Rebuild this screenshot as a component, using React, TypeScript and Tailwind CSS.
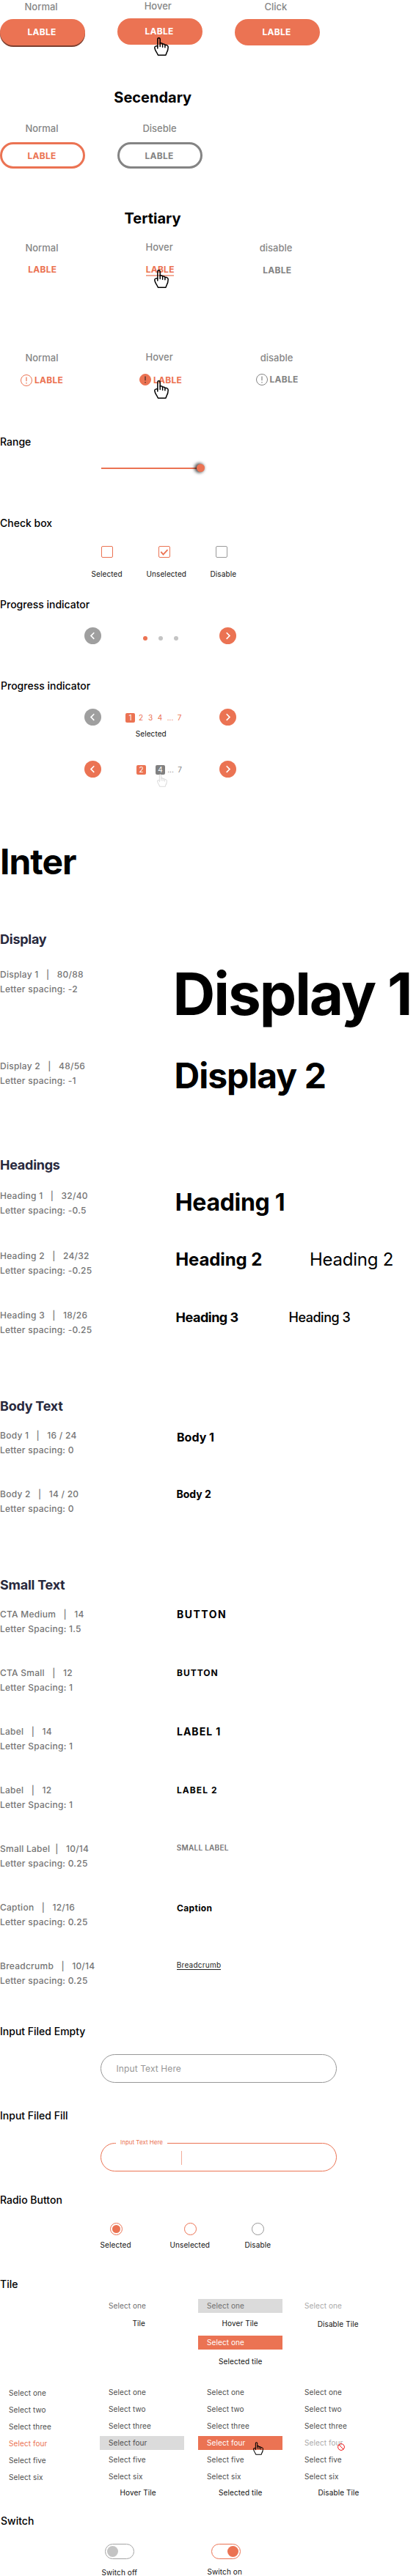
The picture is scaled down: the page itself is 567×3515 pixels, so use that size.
import type { ReactNode } from "react";

type Box = { className?: string; children?: ReactNode };

function Hand({ className = "" }: { className?: string }) {
  return (
    <svg viewBox="0 0 20 25" fill="none" stroke="currentColor" strokeWidth="1.5" strokeLinecap="round" strokeLinejoin="round" className={`absolute ${className}`}>
      <path d="M4.8 12V2.4a1.7 1.7 0 0 1 3.4 0V8c1.3-.5 3 .1 3.4 1.100 1.300-.3 2.900.2 3.300 1.300 2-.3 4.300.5 4.300 2.900 0 3.600-.6 5.600-2.300 8.300-.5.900-.4 2.200-1.200 2.700H5.700c-.9-.5-.9-1.700-1.700-2.900C1.900 18.400.8 16.500.8 13.600c0-1.400 2.200-2.100 4-1.600z" />
      <path d="M4.800 12v3M8.200 8v4.500M11.600 9.200v4M14.900 10.500v3.300" />
    </svg>
  );
}

function Alert({ className = "", filled = false }: { className?: string; filled?: boolean }) {
  return (
    <svg viewBox="0 0 16 16" fill="none" className={`block size-4 ${className}`}>
      <circle cx="8" cy="8" r="7.500" stroke="currentColor" fill={filled ? "currentColor" : "none"} />
      <path d="M8 3.600v5.600M8 11v1.500" stroke={filled ? "#3d2a26" : "currentColor"} strokeWidth="1.200" />
    </svg>
  );
}

function State({ className = "", children }: Box) {
  return <div className={`text-[13px] leading-[16px] font-medium whitespace-nowrap text-[#868686] ${className}`}>{children}</div>;
}

function Cta({ className = "", children = "LABLE" }: Box) {
  return <span className={`block text-[12px] leading-[15px] font-bold tracking-[0.25px] whitespace-nowrap ${className}`}>{children}</span>;
}

function Title({ className = "", children }: Box) {
  return <h2 className={`text-[14px] leading-[17px] font-medium whitespace-nowrap text-black ${className}`}>{children}</h2>;
}

function Note({ className = "", children }: Box) {
  return <div className={`text-[10px] leading-[12px] tracking-[0.1px] whitespace-nowrap text-[#111] ${className}`}>{children}</div>;
}

function Arrow({ className = "", left = false }: { className?: string; left?: boolean }) {
  return (
    <button className={`block size-[23px] shrink-0 rounded-full text-white ${className}`}>
      <svg viewBox="0 0 23 23" fill="none" stroke="currentColor" strokeWidth="1.600" className="block size-[23px]">
        <path d={left ? "M13.300 7.300 9 11.600l4.300 4.300" : "M9.700 7.300 14 11.600l-4.300 4.300"} />
      </svg>
    </button>
  );
}

function Group({ className = "", children }: Box) {
  return <h3 className={`text-[18px] leading-[21px] font-bold tracking-[-0.25px] text-[#28293d] ${className}`}>{children}</h3>;
}

function Spec({ name, spacing, className = "", children }: { name: string; spacing: string; className?: string; children: ReactNode }) {
  return (
    <div className={`flex items-start whitespace-nowrap ${className}`}>
      <div className="flex w-[240px] shrink-0 flex-col gap-[5px] text-[12px] leading-[15px] font-medium tracking-[0.25px] text-[#757575]">
        <div className="whitespace-pre">{name}</div>
        <div>{spacing}</div>
      </div>
      {children}
    </div>
  );
}

const words = ["one", "two", "three", "four", "five", "six"];

function List({ className = "", four = "", children }: Box & { four?: string }) {
  return (
    <div className={`relative ${className}`}>
      {words.map((w) => (
        <div key={w} className={`mb-1 h-[19px] w-[115px] pt-[3px] pl-[12px] text-[10px] leading-[12px] tracking-[0.1px] ${w === "four" ? four : "text-[#4d4d4d]"}`}>
          Select {w}
        </div>
      ))}
      {children}
    </div>
  );
}

export default function App() {
  return (
    <main className="h-[3515px] w-[567px] overflow-hidden bg-white font-['Inter',sans-serif] text-black">
      {/* Primary */}
      <section className="grid h-[121px] grid-cols-[160px_160px_116px] items-start">
        <div className="pt-px">
          <State className="pl-[33.500px]">Normal</State>
          <button className="mt-[9px] block h-9 w-[116px] rounded-[18px] bg-[#eb7353] pt-[10px] pb-[11px] pl-[37.500px] text-left text-white shadow-[0_2px_0_#7d3f2f]"><Cta /></button>
        </div>
        <div className="relative">
          <State className="pl-[36.700px]">Hover</State>
          <button className="mt-[9px] block h-9 w-[116px] rounded-[18px] bg-[#eb7353] pt-[10px] pb-[11px] pl-[37.500px] text-left text-white"><Cta /></button>
          <Hand className="top-[51px] left-[50px] h-[25px] w-5" />
        </div>
        <div className="pt-px">
          <State className="pl-[40.500px]">Click</State>
          <button className="mt-[9px] block h-9 w-[116px] rounded-[18px] bg-[#eb7353] pt-[10px] pb-[11px] pl-[37.500px] text-left text-white"><Cta /></button>
        </div>
      </section>

      {/* Secondary */}
      <section className="h-[165px]">
        <h1 className="pl-[155.300px] text-[20px] leading-[24px] font-bold">Secendary</h1>
        <div className="mt-[22px] grid grid-cols-[160px_160px]">
          <div>
            <State className="pl-[34.400px]">Normal</State>
            <button className="mt-[11px] block h-9 w-[116px] rounded-[18px] border-3 border-[#eb7353] pt-[8px] pb-[7px] pl-[34.500px] text-left text-[#eb7353]"><Cta /></button>
          </div>
          <div>
            <State className="pl-[34.400px]">Diseble</State>
            <button className="mt-[11px] block h-9 w-[116px] rounded-[18px] border-3 border-[#848484] pt-[8px] pb-[7px] pl-[34.500px] text-left text-[#848484]"><Cta /></button>
          </div>
        </div>
      </section>

      {/* Tertiary */}
      <section className="h-[308px]">
        <h1 className="pl-[169.500px] text-[20px] leading-[24px] font-bold">Tertiary</h1>
        <div className="mt-[19px] grid h-[150px] grid-cols-[160px_160px_160px] items-start">
          <div className="pt-px">
            <State className="pl-[34.400px]">Normal</State>
            <Cta className="mt-[14px] ml-[38.300px] text-[#eb7353]" />
          </div>
          <div className="relative">
            <State className="pl-[38.500px]">Hover</State>
            <Cta className="mt-[15px] ml-[38.700px] w-[38.500px] border-b-2 border-[#eb7353]/60 text-[#eb7353]" />
            <Hand className="top-[39px] left-[50px] h-[25px] w-5" />
          </div>
          <div className="pt-px">
            <State className="pl-[33.800px]">disable</State>
            <Cta className="mt-[15px] ml-[38.300px] text-[#848484]" />
          </div>
        </div>
        <div className="grid grid-cols-[160px_160px_160px] items-start">
          <div className="pt-px">
            <State className="pl-[34.400px]">Normal</State>
            <div className="mt-[15px] flex items-start pl-[28px] text-[#eb7353]"><Alert /><Cta className="ml-[3px]" /></div>
          </div>
          <div className="relative">
            <State className="pl-[38.500px]">Hover</State>
            <div className="mt-[15px] flex items-start pl-[30px] text-[#eb7353]"><Alert filled /><Cta className="mt-px ml-[3px]" /></div>
            <Hand className="top-[40px] left-[50px] h-[25px] w-5" />
          </div>
          <div className="pt-px">
            <State className="pl-[34.800px]">disable</State>
            <div className="mt-[14px] flex items-start pl-[29px] text-[#848484]"><Alert /><Cta className="ml-[2.500px]" /></div>
          </div>
        </div>
      </section>

      {/* Range */}
      <section className="h-[111px]">
        <Title>Range</Title>
        <div className="mt-[22px] ml-[138px] flex h-[11px] w-[141px] items-center">
          <div className="h-[2px] flex-1 bg-[#eb7353]" />
          <div className="size-[11px] rounded-full bg-[#eb7353] shadow-[-2px_0_4px_1px_rgba(0,0,0,0.75)]" />
        </div>
      </section>

      {/* Check box */}
      <section className="h-[111px]">
        <Title>Check box</Title>
        <div className="mt-[23px] flex gap-[62px] pl-[138px]">
          <div className="size-4 rounded-[2px] border border-[#eb7353]" />
          <div className="size-4 rounded-[2px] border border-[#eb7353] text-[#eb7353]">
            <svg viewBox="0 0 14 14" fill="none" stroke="currentColor" strokeWidth="1.800" className="block size-[14px]"><path d="m2.300 6.900 3.200 3.800 6-6.500" /></svg>
          </div>
          <div className="size-4 rounded-[2px] border border-[#9a9a9a]" />
        </div>
        <div className="mt-4 grid grid-cols-[75px_87px_60px] pl-[124.500px]">
          <Note>Selected</Note>
          <Note>Unselected</Note>
          <Note>Disable</Note>
        </div>
      </section>

      {/* Progress indicators */}
      <section className="h-[111px]">
        <Title>Progress indicator</Title>
        <div className="mt-[23px] flex w-[322px] items-start pl-[115px]">
          <Arrow left className="bg-[#9f9f9f]" />
          <div className="mt-[12px] ml-[57px] flex gap-[15px]">
            <i className="size-[6px] rounded-full bg-[#eb7353]" />
            <i className="size-[6px] rounded-full bg-[#c4c4c4]" />
            <i className="size-[6px] rounded-full bg-[#c4c4c4]" />
          </div>
          <Arrow className="ml-auto bg-[#eb7353]" />
        </div>
      </section>
      <section className="h-[219px]">
        <Title className="pl-px">Progress indicator</Title>
        <div className="mt-[23px] flex h-[28px] w-[322px] items-start pl-[115px]">
          <Arrow left className="bg-[#9f9f9f]" />
          <div className="mt-[6px] ml-[33px] flex text-center text-[10px] leading-[12px] text-[#eb7353]">
            <span className="h-[13px] w-[13px] rounded-[2px] bg-[#eb7353] text-white">1</span>
            <span className="ml-[1.500px] w-[13px]">2</span>
            <span className="w-[13px]">3</span>
            <span className="w-[13px]">4</span>
            <span className="ml-px w-[13px]">...</span>
            <span className="w-[12px]">7</span>
          </div>
          <Arrow className="ml-auto bg-[#eb7353]" />
        </div>
        <Note className="pl-[184.700px]">Selected</Note>
        <div className="mt-[31px] flex w-[322px] items-start pl-[115px]">
          <Arrow left className="bg-[#eb7353]" />
          <div className="relative mt-[6px] ml-[48px] flex text-center text-[10px] leading-[12px] text-[#848484]">
            <span className="h-[13px] w-[13px] rounded-[2px] bg-[#eb7353] text-white">2</span>
            <span className="ml-[13px] h-[13px] w-[13px] rounded-[2px] bg-[#808080] text-white">4</span>
            <span className="ml-[1px] w-[13px]">...</span>
            <span className="w-[12px]">7</span>
            <Hand className="top-[12px] left-[28px] h-[18px] w-[14px] text-[#dcdcdc]" />
          </div>
          <Arrow className="ml-auto bg-[#eb7353]" />
        </div>
      </section>

      {/* Typography */}
      <h1 className="h-[125px] text-[48px] leading-[59px] font-bold tracking-[-1px]">Inter</h1>
      <Group className="h-[51px]">Display</Group>
      <Spec className="h-[125px]" name="Display 1   |   80/88" spacing="Letter spacing: -2">
        <div className="-mt-[15px] -ml-[4.500px] text-[80px] leading-[97px] font-bold tracking-[-2px]">Display 1</div>
      </Spec>
      <Spec className="h-[132px]" name="Display 2   |   48/56" spacing="Letter spacing: -1">
        <div className="-mt-[9px] -ml-[2.500px] text-[48px] leading-[59px] font-bold tracking-[-1px]">Display 2</div>
      </Spec>
      <Group className="h-[45px]">Headings</Group>
      <Spec className="h-[82px]" name="Heading 1   |   32/40" spacing="Letter spacing: -0.5">
        <div className="-mt-[3px] -ml-[1.300px] text-[32px] leading-[39px] font-bold tracking-[-0.3px]">Heading 1</div>
      </Spec>
      <Spec className="h-[81px]" name="Heading 2   |   24/32" spacing="Letter spacing: -0.25">
        <div className="-mt-[2px] -ml-[0.700px] flex text-[24px] leading-[29px]">
          <div className="w-[182.700px] font-bold tracking-[-0.12px]">Heading 2</div>
          <div className="font-normal tracking-[-0.25px]">Heading 2</div>
        </div>
      </Spec>
      <Spec className="h-[121px]" name="Heading 3   |   18/26" spacing="Letter spacing: -0.25">
        <div className="-ml-[0.400px] flex text-[18px] leading-[21px] tracking-[-0.5px]">
          <div className="w-[154px] font-bold">Heading 3</div>
          <div className="font-medium">Heading 3</div>
        </div>
      </Spec>
      <Group className="h-[43px]">Body Text</Group>
      <Spec className="h-[80px]" name="Body 1   |   16 / 24" spacing="Letter spacing: 0">
        <div className="ml-px text-[16px] leading-[20px] font-bold">Body 1</div>
      </Spec>
      <Spec className="h-[121px]" name="Body 2   |   14 / 20" spacing="Letter spacing: 0">
        <div className="-mt-px ml-[0.500px] text-[14px] leading-[17px] font-bold">Body 2</div>
      </Spec>
      <Group className="h-[43px]">Small Text</Group>
      <Spec className="h-20" name="CTA Medium   |   14" spacing="Letter Spacing: 1.5">
        <div className="-mt-px ml-px text-[14px] leading-[17px] font-bold tracking-[1.5px]">BUTTON</div>
      </Spec>
      <Spec className="h-20" name="CTA Small   |   12" spacing="Letter Spacing: 1">
        <div className="ml-px text-[12px] leading-[15px] font-bold tracking-[1px]">BUTTON</div>
      </Spec>
      <Spec className="h-20" name="Label   |   14" spacing="Letter Spacing: 1">
        <div className="-mt-px ml-px text-[14px] leading-[17px] font-bold tracking-[1px]">LABEL 1</div>
      </Spec>
      <Spec className="h-20" name="Label   |   12" spacing="Letter Spacing: 1">
        <div className="ml-px text-[12px] leading-[15px] font-bold tracking-[1.050px]">LABEL 2</div>
      </Spec>
      <Spec className="h-20" name="Small Label  |   10/14" spacing="Letter spacing: 0.25">
        <div className="ml-[0.800px] text-[10px] leading-[12px] font-semibold tracking-[0.25px] text-[#757575]">SMALL LABEL</div>
      </Spec>
      <Spec className="h-20" name="Caption   |   12/16" spacing="Letter spacing: 0.25">
        <div className="mt-px ml-px text-[12px] leading-[15px] font-bold tracking-[0.35px]">Caption</div>
      </Spec>
      <Spec className="h-[88px]" name="Breadcrumb   |   10/14" spacing="Letter spacing: 0.25">
        <div className="ml-[0.800px] border-b border-[#222] text-[10px] leading-[12px] tracking-[0.25px] text-[#222]">Breadcrumb</div>
      </Spec>

      {/* Inputs */}
      <section className="h-[115px]">
        <Title>Input Filed Empty</Title>
        <div className="mt-[23px] ml-[137px] h-[39px] w-[322px] rounded-[19.500px] border border-[#979797] pt-[11px] pl-[20.500px] text-[12px] leading-[15px] tracking-[0.1px] text-[#979797]">Input Text Here</div>
      </section>
      <section className="h-[115px]">
        <Title>Input Filed Fill</Title>
        <div className="relative mt-[29px] ml-[137px] h-[39px] w-[322px] rounded-[19.500px] border border-[#eb7353]">
          <span className="absolute -top-[7px] left-[20px] w-[70px] bg-white pl-[6px] text-[8px] leading-[10px] whitespace-nowrap text-[#eb7353]">Input Text Here</span>
          <div className="mt-[10px] ml-[109px] h-[19px] w-px bg-[#f3ac99]" />
        </div>
      </section>

      {/* Radio */}
      <section className="h-[115px]">
        <Title>Radio Button</Title>
        <div className="mt-[23px] flex pl-[150px]">
          <div className="flex size-[17px] items-center justify-center rounded-full border border-[#eb7353]"><i className="size-[11px] rounded-full bg-[#eb7353]" /></div>
          <div className="ml-[84px] size-[17px] rounded-full border border-[#eb7353]" />
          <div className="ml-[75px] size-[17px] rounded-full border border-[#979797]" />
        </div>
        <div className="mt-[7px] grid grid-cols-[95px_102px_60px] pl-[136.500px]">
          <Note>Selected</Note>
          <Note>Unselected</Note>
          <Note>Disable</Note>
        </div>
      </section>

      {/* Tile */}
      <section className="h-[323px]">
        <Title>Tile</Title>
        <div className="mt-[12px] grid h-[118px] grid-cols-[134px_133px_115px] items-start pl-[136px]">
          <div>
            <div className="h-[19px] w-[115px] pt-[3px] pl-[12px] text-[10px] leading-[12px] tracking-[0.1px] text-[#6f6f6f]">Select one</div>
            <Note className="mt-2 pl-[44.500px]">Tile</Note>
          </div>
          <div>
            <div className="h-[19px] w-[115px] bg-[#dbdbdb] pt-[3px] pl-[12px] text-[10px] leading-[12px] tracking-[0.1px] text-[#6f6f6f]">Select one</div>
            <Note className="mt-2 pl-[32.500px]">Hover Tile</Note>
            <div className="mt-[11px] h-[19px] w-[115px] bg-[#eb7353] pt-[3px] pl-[12px] text-[10px] leading-[12px] tracking-[0.1px] text-white">Select one</div>
            <Note className="mt-[10px] pl-[28px]">Selected tile</Note>
          </div>
          <div>
            <div className="h-[19px] pt-[3px] pl-[12px] text-[10px] leading-[12px] tracking-[0.1px] text-[#aaa]">Select one</div>
            <Note className="mt-[9px] pl-[29.700px]">Disable Tile</Note>
          </div>
        </div>
        <div className="grid grid-cols-[136px_134px_133px_115px] items-start">
          <List className="pt-px" four="text-[#eb7353]" />
          <div>
            <List four="bg-[#dbdbdb] text-[#4d4d4d]" />
            <Note className="mt-[6px] pl-[27.500px]">Hover Tile</Note>
          </div>
          <div>
            <List four="bg-[#eb7353] text-white"><Hand className="top-[77px] left-[75px] h-[18px] w-[14px] text-black" /></List>
            <Note className="mt-[6px] pl-[28px]">Selected tile</Note>
          </div>
          <div>
            <List four="text-[#aaa]">
              <svg viewBox="0 0 10 10" fill="none" stroke="#f01818" className="absolute top-[79px] left-[57px] size-[10px]"><circle cx="5" cy="5" r="4.400" /><path d="m2 2 6 6" /></svg>
            </List>
            <Note className="mt-[6px] pl-[30.500px]">Disable Tile</Note>
          </div>
        </div>
      </section>

      {/* Switch */}
      <section className="h-[84px]">
        <Title className="pl-px">Switch</Title>
        <div className="mt-[23px] grid grid-cols-[145px_60px] pl-[143px]">
          <div className="flex h-[21px] w-10 items-center rounded-full border border-[#a3a3a3] pl-[2px]"><i className="size-[15px] rounded-full bg-[#c4c4c4]" /></div>
          <div className="flex h-[21px] w-10 items-center justify-end rounded-full border border-[#eb7353] pr-[2px]"><i className="size-[15px] rounded-full bg-[#eb7353]" /></div>
        </div>
        <div className="mt-[11px] grid grid-cols-[144px_60px] pl-[138.500px]">
          <Note className="pt-px">Switch off</Note>
          <Note>Switch on</Note>
        </div>
      </section>
    </main>
  );
}
